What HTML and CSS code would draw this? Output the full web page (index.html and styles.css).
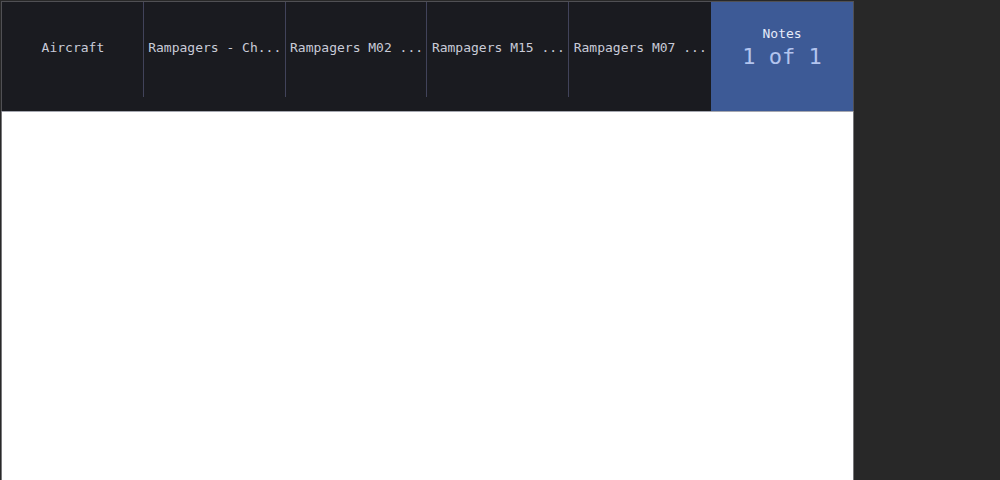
FILE: index.html
```html
<!DOCTYPE html>
<html lang="en">
<head>
<meta charset="utf-8">
<title>Notes</title>
<link rel="stylesheet" href="styles.css">
</head>
<body>
<main class="viewer">
  <nav class="tabs" aria-label="Sections">
    <button class="tab" type="button"><span class="tab-title">Aircraft</span></button>
    <button class="tab" type="button"><span class="tab-title">Rampagers - Ch...</span></button>
    <button class="tab" type="button"><span class="tab-title">Rampagers M02 ...</span></button>
    <button class="tab" type="button"><span class="tab-title">Rampagers M15 ...</span></button>
    <button class="tab" type="button"><span class="tab-title">Rampagers M07 ...</span></button>
    <button class="tab tab-active" type="button" aria-current="page">
      <span class="tab-title">Notes</span>
      <span class="tab-count">1 of 1</span>
    </button>
  </nav>
  <section class="page" aria-label="Notes page"></section>
</main>
</body>
</html>
```
FILE: styles.css
```css
* {
  box-sizing: border-box;
}

body {
  margin: 0;
  min-height: 100vh;
  display: flex;
  background: #282828;
  font-family: "DejaVu Sans Mono", "Liberation Mono", monospace;
}

.viewer {
  width: 85.4%;
  display: flex;
  flex-direction: column;
  padding: 1px 0 0 1px;
}

.tabs {
  display: grid;
  grid-template-columns: repeat(6, 1fr);
  background: #1a1b20;
  border: 1px solid #505054;
  border-bottom-color: #a5a7b0;
}

.tab {
  min-width: 0;
  height: 109px;
  padding: 0 0 18px;
  display: flex;
  flex-direction: column;
  align-items: center;
  justify-content: center;
  border: 0;
  background: linear-gradient(#41435a, #41435a) right top / 1px 95px no-repeat;
  color: #c9cbd8;
  font-family: inherit;
  font-size: 13px;
  line-height: 20px;
  white-space: nowrap;
}

.tab:nth-child(5) {
  background: none;
}

.tab-active {
  padding-bottom: 20px;
  background: #3d5a96;
  color: #e6ebfa;
}

.tab-count {
  color: #b3c4ee;
  font-size: 22px;
  line-height: 26px;
}

.page {
  flex: 1;
  background: #ffffff;
  border: solid #77777a;
  border-width: 0 1px;
}
```
